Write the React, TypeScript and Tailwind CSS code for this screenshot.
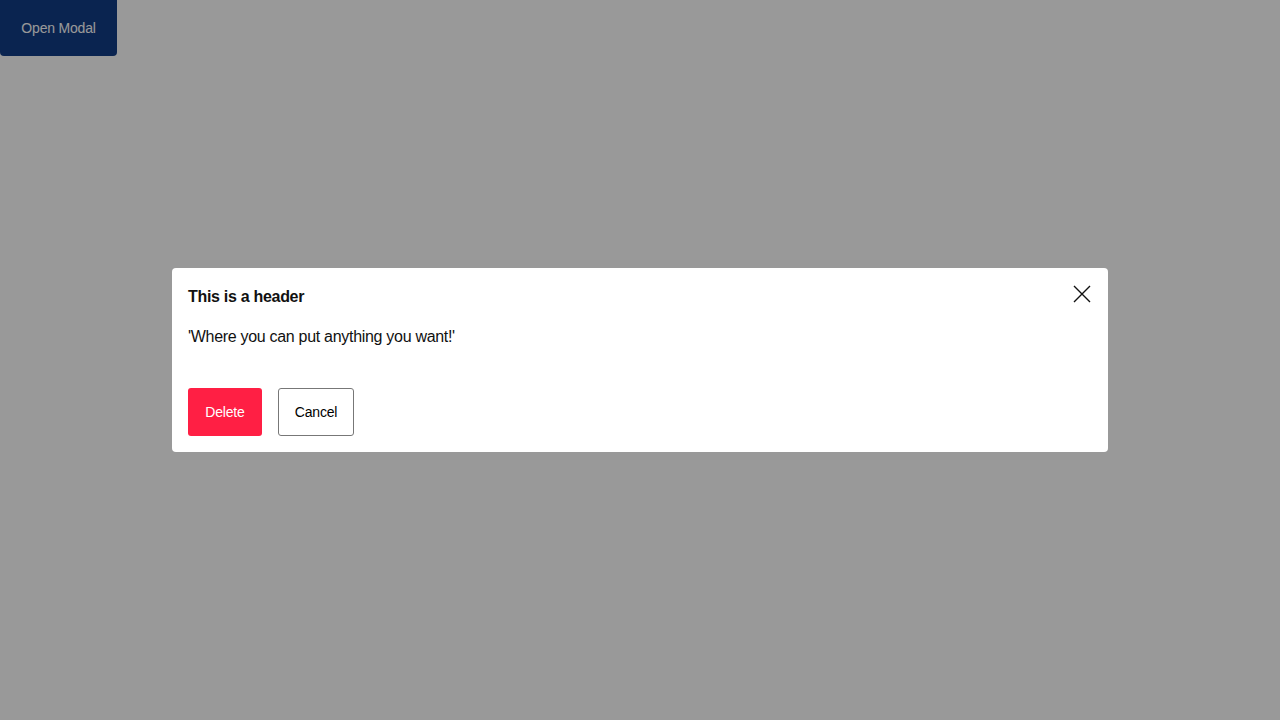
import React from "react";

export default function App() {
  return (
    <div className="relative h-[720px] w-[1280px] bg-white font-['Liberation_Sans',Arial,sans-serif]">
      <button className="h-[56px] w-[117px] rounded-b-[4px] bg-[#123d85] text-[14px] tracking-[-0.2px] text-white">
        Open Modal
      </button>
      <div className="absolute inset-0 flex items-center justify-center bg-black/40">
        <div className="w-[936px] rounded-[4px] bg-white px-4 pb-4 pt-[17px]">
          <div className="flex items-center justify-between">
            <h2 className="text-[16px] font-bold leading-[24px] tracking-[-0.3px] text-[#111]">This is a header</h2>
            <button className="-mt-[6px] -mr-[2px] flex h-[24px] w-[24px] items-center justify-center">
              <svg width="18" height="18" viewBox="0 0 18 18" fill="none" stroke="#111" strokeWidth="1.4">
                <path d="M1 1L17 17M17 1L1 17" />
              </svg>
            </button>
          </div>
          <p className="mt-[16px] text-[16px] leading-[24px] tracking-[-0.3px] text-[#111]">'Where you can put anything you want!'</p>
          <div className="mt-[39px] flex gap-4">
            <button className="h-[48px] w-[74px] rounded-[3px] bg-[#ff1f44] text-[14px] tracking-[-0.2px] text-white">Delete</button>
            <button className="h-[48px] w-[76px] rounded-[3px] border border-[#777] bg-white text-[14px] tracking-[-0.2px] text-black">Cancel</button>
          </div>
        </div>
      </div>
    </div>
  );
}
